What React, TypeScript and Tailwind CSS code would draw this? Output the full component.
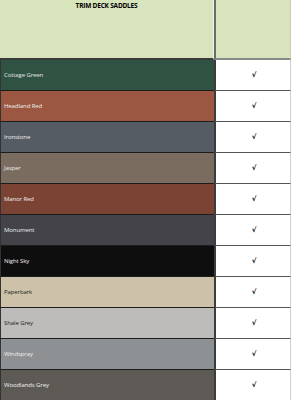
import React from 'react';

type Colour = { name: string; bg: string; text: string };

const colours: Colour[] = [
  { name: 'Cottage Green', bg: 'bg-[#2f5243]', text: 'text-[#e6e6e6]' },
  { name: 'Headland Red', bg: 'bg-[#9b5742]', text: 'text-[#eeeeee]' },
  { name: 'Ironstone', bg: 'bg-[#565c64]', text: 'text-[#eeeeee]' },
  { name: 'Jasper', bg: 'bg-[#7a6c5e]', text: 'text-[#eeeeee]' },
  { name: 'Manor Red', bg: 'bg-[#7b4333]', text: 'text-[#eeeeee]' },
  { name: 'Monument', bg: 'bg-[#434349]', text: 'text-[#eeeeee]' },
  { name: 'Night Sky', bg: 'bg-[#0e0e0e]', text: 'text-[#eeeeee]' },
  { name: 'Paperbark', bg: 'bg-[#cdc2a9]', text: 'text-[#222222]' },
  { name: 'Shale Grey', bg: 'bg-[#bdbcba]', text: 'text-[#222222]' },
  { name: 'Windspray', bg: 'bg-[#8d9194]', text: 'text-[#eeeeee]' },
  { name: 'Woodlands Grey', bg: 'bg-[#5d5a55]', text: 'text-[#eeeeee]' },
];

const App: React.FC = () => {
  return (
    <div className="w-[291px] h-[400px] overflow-hidden bg-white font-['Open_Sans',sans-serif]">
      <div className="grid grid-cols-[214px_1fr]">
        {/* header */}
        <div className="h-[60px] bg-[#d8e4bc] border-b-2 border-[#3a3a3a] border-r border-r-[#eef3e0] text-center">
          <div className="pt-[1px] text-[6.5px] leading-[9px] font-bold text-black tracking-[-0.2px]">TRIM DECK SADDLES</div>
        </div>
        <div className="h-[60px] bg-[#d8e4bc] border-l-2 border-[#6b6b6b] border-b-2 border-b-[#8a8a8a] border-r border-r-[#c8cfb8]" />

        {colours.map((c) => (
          <React.Fragment key={c.name}>
            <div className={`h-[31px] ${c.bg} border-b border-[#1c1c1c] border-l border-l-[#333] flex items-center pl-[3px]`}>
              <span className={`text-[6px] tracking-[-0.1px] ${c.text}`}>{c.name}</span>
            </div>
            <div className="h-[31px] bg-white border-l-2 border-[#3c3c3c] border-b border-b-[#555] border-r border-r-[#d0d0d0] flex items-center justify-center">
              <span className="font-['DejaVu_Sans',sans-serif] text-[7px] font-bold text-black pl-[2px]">√</span>
            </div>
          </React.Fragment>
        ))}
      </div>
    </div>
  );
};

export default App;
